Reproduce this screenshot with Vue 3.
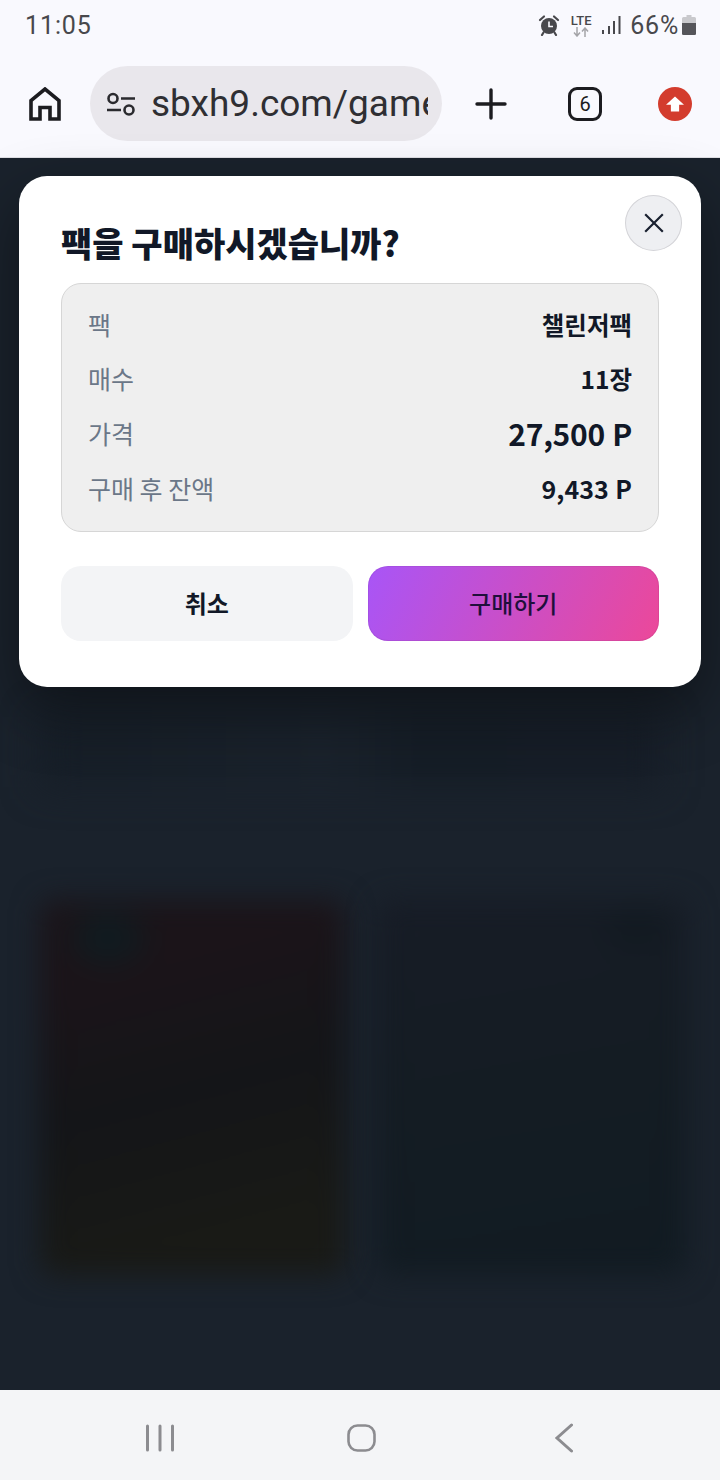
<template>
  <div class="page">
    <!-- status bar -->
    <div class="status">
      <span class="time">11:05</span>
      <div class="status-right">
        <svg class="alarm" width="22" height="22" viewBox="0 0 22 22">
          <circle cx="11" cy="12" r="8" fill="#48484c" />
          <path d="M11 7.500V12.500H15" fill="none" stroke="#f9f9fe" stroke-width="1.600" />
          <path d="M2 6L6 2.500M20 6L16 2.500" stroke="#48484c" stroke-width="2.200" stroke-linecap="round" />
          <path d="M5.500 18.500L4 21M16.500 18.500L18 21" stroke="#48484c" stroke-width="2.200" stroke-linecap="round" />
        </svg>
        <div class="lte">
          <span>LTE</span>
          <svg width="18" height="10" viewBox="0 0 18 10">
            <path d="M5 0V8M2 5.500L5 9L8 5.500" fill="none" stroke="#a4a4a8" stroke-width="1.500" />
            <path d="M13 10V2M10 4.500L13 1L16 4.500" fill="none" stroke="#a4a4a8" stroke-width="1.500" />
          </svg>
        </div>
        <svg class="signal" width="20" height="20" viewBox="0 0 20 20">
          <path d="M2 15V19M8 11V19M13 6V19M18.500 1V19" stroke="#48484c" stroke-width="2" />
        </svg>
        <span class="pct">66%</span>
        <svg width="14" height="20" viewBox="0 0 14 20">
          <path d="M4.500 0H9.500V2H12.500Q14 2 14 3.500V18.500Q14 20 12.500 20H1.500Q0 20 0 18.500V3.500Q0 2 1.500 2H4.500Z" fill="#c9c9cd" />
          <path d="M0 8H14V18.500Q14 20 12.500 20H1.500Q0 20 0 18.500Z" fill="#55555a" />
        </svg>
      </div>
    </div>

    <!-- browser toolbar -->
    <div class="toolbar">
      <svg class="home" width="32" height="34" viewBox="0 0 32 34">
        <path d="M2 32V13.500L16 2L30 13.500V32H21V20.500H11V32Z" fill="none" stroke="#1c1c20" stroke-width="3.600" />
      </svg>
      <div class="url">
        <svg width="30" height="24" viewBox="0 0 30 24">
          <circle cx="7" cy="6.500" r="4.500" fill="none" stroke="#2a2a2e" stroke-width="2.600" />
          <path d="M15 6.500H29M1 18H15" stroke="#2a2a2e" stroke-width="2.600" />
          <circle cx="23" cy="18" r="4.500" fill="none" stroke="#2a2a2e" stroke-width="2.600" />
        </svg>
        <span class="url-text">sbxh9.com/game</span>
      </div>
      <svg class="plus" width="32" height="32" viewBox="0 0 32 32">
        <path d="M16 2V30M2 16H30" stroke="#1c1c20" stroke-width="3.400" stroke-linecap="round" />
      </svg>
      <div class="tabs">6</div>
      <div class="update">
        <svg width="26" height="24" viewBox="0 0 26 24">
          <path d="M13 2L25 13H18.500V22H7.500V13H1Z" fill="#fff" />
        </svg>
      </div>
    </div>

    <!-- dimmed page with modal -->
    <main class="screen">
      <section class="modal">
        <button class="close">
          <svg width="22" height="22" viewBox="0 0 20 20">
            <path d="M2 2L18 18M18 2L2 18" stroke="#1a2130" stroke-width="2" />
          </svg>
        </button>
        <h1 class="title">팩을 구매하시겠습니까?</h1>
        <div class="summary">
          <div v-for="row in rows" :key="row.label" class="row" :class="row.cls">
            <span class="label">{{ row.label }}</span>
            <span class="value">{{ row.value }}</span>
          </div>
        </div>
        <div class="actions">
          <button class="btn cancel">취소</button>
          <button class="btn buy">구매하기</button>
        </div>
      </section>

      <div class="strip"></div>

      <div class="blurred">
        <div class="card card-red"></div>
        <div class="card card-blue"></div>
      </div>
    </main>

    <!-- android nav -->
    <nav class="nav">
      <svg width="28" height="28" viewBox="0 0 28 28">
        <path d="M1.500 2V26M14 2V26M26.500 2V26" stroke="#8c8c90" stroke-width="3" stroke-linecap="round" />
      </svg>
      <svg class="nav-home" width="29" height="28" viewBox="0 0 29 28">
        <rect x="1.500" y="1.500" width="26" height="25" rx="9" fill="none" stroke="#8c8c90" stroke-width="2.600" />
      </svg>
      <svg width="18" height="30" viewBox="0 0 18 30">
        <path d="M16.500 2L2 15L16.500 28" fill="none" stroke="#8c8c90" stroke-width="3" stroke-linecap="round" />
      </svg>
    </nav>
  </div>
</template>

<script setup>
const rows = [
  { label: "팩", value: "챌린저팩", cls: "" },
  { label: "매수", value: "11장", cls: "" },
  { label: "가격", value: "27,500 P", cls: "price" },
  { label: "구매 후 잔액", value: "9,433 P", cls: "balance" },
];
</script>

<style>
html,
body {
  margin: 0;
  background: #1a222c;
}
</style>

<style scoped>
* {
  box-sizing: border-box;
}

.page {
  width: 720px;
  height: 1480px;
  display: flex;
  flex-direction: column;
  overflow: hidden;
  font-family: "Noto Sans CJK KR", "Noto Sans", sans-serif;
}

/* status bar */

.status {
  height: 50px;
  flex: none;
  background: #f9f9fe;
  display: flex;
  align-items: center;
  justify-content: space-between;
  padding: 0 24px 0 25px;
  color: #48484c;
}

.time {
  font-family: Roboto, sans-serif;
  font-size: 25px;
  font-weight: 400;
  letter-spacing: 0.9px;
}

.status-right {
  display: flex;
  align-items: center;
}

.alarm {
  margin-right: 9px;
}

.lte {
  width: 24px;
  display: flex;
  flex-direction: column;
  align-items: center;
  margin-right: 8px;
  line-height: 1;
}

.lte span {
  font-family: Roboto, sans-serif;
  font-size: 13px;
  font-weight: 500;
  line-height: 13px;
  color: #48484c;
}

.signal {
  margin-right: 9px;
}

.pct {
  font-family: Roboto, sans-serif;
  font-size: 25px;
  font-weight: 400;
  margin-right: 3px;
  letter-spacing: 0.8px;
}

/* toolbar */

.toolbar {
  height: 108px;
  flex: none;
  background: #f9f9fe;
  border-bottom: 1px solid #dfdfe4;
  display: flex;
  align-items: center;
  padding: 0 0 0 29px;
}

.home {
  flex: none;
}

.url {
  width: 352px;
  height: 75px;
  margin-left: 29px;
  border-radius: 38px;
  background: #e9e7ec;
  display: flex;
  align-items: center;
  padding-left: 16px;
  flex: none;
}

.url-text {
  width: 277px;
  margin-left: 15px;
  overflow: hidden;
  white-space: nowrap;
  font-family: Roboto, sans-serif;
  font-size: 37px;
  color: #2f2f33;
}

.plus {
  margin-left: 33px;
  flex: none;
}

.tabs {
  width: 34px;
  height: 34px;
  margin-left: 61px;
  border: 3.5px solid #1c1c20;
  border-radius: 9px;
  display: flex;
  align-items: center;
  justify-content: center;
  font-family: Roboto, sans-serif;
  font-size: 20px;
  font-weight: 400;
  color: #1c1c20;
  flex: none;
}

.update {
  width: 34px;
  height: 34px;
  margin-left: 56px;
  border-radius: 50%;
  background: #d33c2d;
  display: flex;
  align-items: center;
  justify-content: center;
  flex: none;
}

.update svg {
  width: 20px;
  height: 18px;
}

/* dimmed page */

.screen {
  flex: 1;
  background: #1a222c;
  padding: 18px 19px 0;
  display: flex;
  flex-direction: column;
}

.modal {
  position: relative;
  z-index: 1;
  height: 511px;
  flex: none;
  border-radius: 28px;
  background: #fff;
  padding: 44px 42px 0;
  box-shadow: 0 24px 60px rgba(0, 0, 0, 0.42);
}

.close {
  position: absolute;
  top: 19px;
  right: 19px;
  width: 57px;
  height: 56px;
  padding: 0;
  border-radius: 50%;
  border: 1px solid #d4d4d8;
  background: #eeeff2;
  display: flex;
  align-items: center;
  justify-content: center;
}

.title {
  margin: 0;
  font-size: 34px;
  line-height: 46px;
  font-weight: 900;
  color: #111827;
}

.summary {
  margin-top: 17px;
  height: 249px;
  padding: 13px 26px 0 26px;
  border-radius: 20px;
  background: #efefef;
  border: 1px solid #d6d6d6;
}

.row {
  height: 54px;
  display: flex;
  align-items: center;
  justify-content: space-between;
}

.row.price {
  height: 56px;
}

.label {
  font-size: 25px;
  color: #6b7788;
}

.value {
  font-size: 24.5px;
  font-weight: 700;
  color: #111827;
}

.price .value {
  font-size: 30px;
  word-spacing: 1px;
  letter-spacing: -0.3px;
}

.balance .value {
  font-size: 25px;
  word-spacing: 1px;
}

.actions {
  margin-top: 34px;
  display: grid;
  grid-template-columns: 1fr 1fr;
  gap: 15px;
}

.btn {
  height: 75px;
  padding: 0 0 2px;
  border-radius: 20px;
  border: none;
  font-family: inherit;
  font-size: 24px;
  font-weight: 700;
  color: #111827;
}

.cancel {
  background: #f3f4f6;
}

.buy {
  background: linear-gradient(115deg, #a855f7, #ec4899);
  box-shadow: inset 0 0 0 1px rgba(60, 30, 80, 0.08);
  color: #1f0f3c;
  font-weight: 500;
}

/* blurred page content behind the overlay */

.strip {
  height: 70px;
  margin: 30px 40px 0 20px;
  background: linear-gradient(90deg, #161e27 0%, #1a222c 48%, #151d26 60%, #161d27 90%);
  filter: blur(18px);
}

.blurred {
  margin-top: 113px;
  padding: 0 13px 0 21px;
  display: grid;
  grid-template-columns: 305px 310px;
  gap: 32px;
}

.card {
  height: 375px;
  border-radius: 14px;
  filter: blur(14px);
}

.card-red {
  background:
    radial-gradient(ellipse 46px 34px at 68px 38px, #101b20 50%, transparent),
    linear-gradient(165deg, #1b1419 20%, #141518 50%, #191a16 85%);
}

.card-blue {
  background:
    radial-gradient(ellipse 40px 24px at 260px 30px, #121a21 60%, transparent),
    linear-gradient(170deg, #171c26, #141c23 50%, #111b22);
}

/* nav */

.nav {
  height: 90px;
  flex: none;
  background: #f4f5f7;
  display: flex;
  align-items: center;
  justify-content: space-between;
  padding: 6px 147px 0 146px;
}

.nav-home {
  margin-right: 7px;
}
</style>
